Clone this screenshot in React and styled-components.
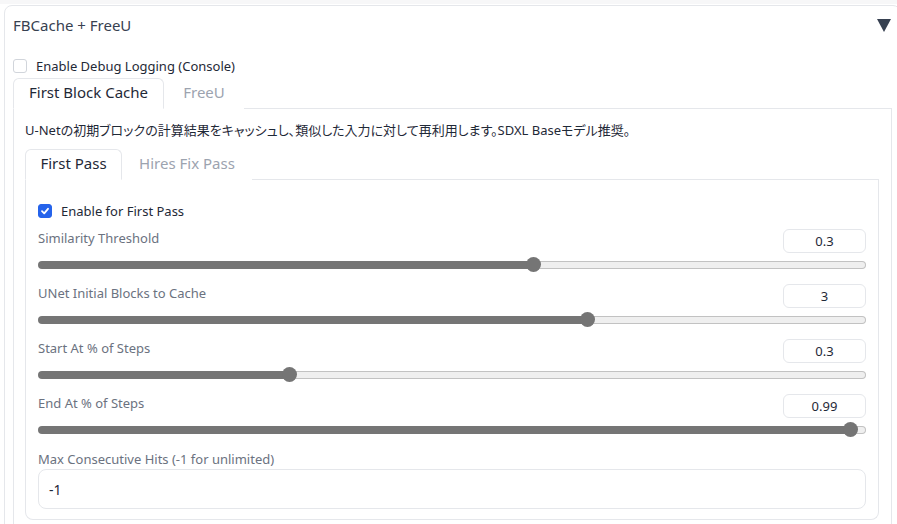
import React from 'react';
import styled, { createGlobalStyle } from 'styled-components';

const GlobalStyle = createGlobalStyle`
  html, body {
    margin: 0;
    padding: 0;
    background: #ffffff;
    overflow: hidden;
  }
  body {
    font-family: "Noto Sans", "Noto Sans CJK JP", sans-serif;
    color: #1f2937;
  }
`;

const sliders = [
  { label: 'Similarity Threshold', value: '0.3', frac: 0.6 },
  { label: 'UNet Initial Blocks to Cache', value: '3', frac: 0.667 },
  { label: 'Start At % of Steps', value: '0.3', frac: 0.3 },
  { label: 'End At % of Steps', value: '0.99', frac: 0.989 },
];

const Slider = ({ label, value, frac }) => (
  <SliderRow>
    <SliderHead>
      <FieldLabel>{label}</FieldLabel>
      <NumberBox>{value}</NumberBox>
    </SliderHead>
    <Track>
      <Filled style={{ width: `calc(7px + (100% - 14px) * ${frac})` }} />
      <Rest />
      <Thumb style={{ left: `calc(7px + (100% - 14px) * ${frac})` }} />
    </Track>
  </SliderRow>
);

const Check = () => (
  <svg width="10" height="10" viewBox="0 0 10 10">
    <path d="M2 5.2 L4.2 7.3 L8 2.8" fill="none" stroke="#fff" strokeWidth="1.8" strokeLinecap="round" strokeLinejoin="round" />
  </svg>
);

export default function App() {
  return (
    <>
      <GlobalStyle />
      <TopStrip />
      <Card>
        <Header>
          <Title>FBCache + FreeU</Title>
          <svg width="14" height="13" viewBox="0 0 14 13">
            <polygon points="0,0 14,0 7,13" fill="#374151" />
          </svg>
        </Header>
        <CheckRow $top={14}>
          <Box />
          <CheckText>Enable Debug Logging (Console)</CheckText>
        </CheckRow>
        <TabBar $top={5}>
          <Tab $active $w={151}>First Block Cache</Tab>
          <Tab $w={80}>FreeU</Tab>
        </TabBar>
        <Panel>
          <Description>
            U-Netの初期ブロックの計算結果をキャッシュし、類似した入力に対して再利用します。SDXL Baseモデル推奨。
          </Description>
          <TabBar $top={9}>
            <Tab $active $w={97}>First Pass</Tab>
            <Tab $w={130}>Hires Fix Pass</Tab>
          </TabBar>
          <InnerPanel>
            <CheckRow $top={0} $h={20}>
              <Box $checked><Check /></Box>
              <CheckText>Enable for First Pass</CheckText>
            </CheckRow>
            <Sliders>
              {sliders.map(s => (
                <Slider key={s.label} {...s} />
              ))}
            </Sliders>
            <FieldLabel $top={1}>Max Consecutive Hits (-1 for unlimited)</FieldLabel>
            <TextBox>-1</TextBox>
          </InnerPanel>
        </Panel>
      </Card>
    </>
  );
}

const TopStrip = styled.div`
  height: 4px;
  background: #f7f7f8;
`;

const Card = styled.div`
  margin: 1px 0 0 4px;
  width: 897px;
  box-sizing: border-box;
  border: 1px solid #e5e7eb;
  border-radius: 8px;
  padding: 0 8px;
  height: 560px;
`;

const Header = styled.div`
  height: 39px;
  display: flex;
  align-items: center;
  justify-content: space-between;
  padding-right: 1px;
`;

const Title = styled.span`
  font-size: 15px;
  color: #374151;
  padding-bottom: 2px;
`;

const CheckRow = styled.div`
  margin-top: ${p => p.$top}px;
  height: ${p => p.$h || 14}px;
  display: flex;
  align-items: center;
  gap: 9px;
`;

const Box = styled.span`
  width: 14px;
  height: 14px;
  box-sizing: border-box;
  border-radius: 3px;
  display: inline-flex;
  align-items: center;
  justify-content: center;
  border: 1px solid ${p => (p.$checked ? '#2563eb' : '#d1d5db')};
  background: ${p => (p.$checked ? '#2563eb' : '#ffffff')};
`;

const CheckText = styled.span`
  font-size: 13px;
  color: #1f2937;
`;

const TabBar = styled.div`
  margin-top: ${p => p.$top}px;
  display: flex;
  height: 30px;
  border-bottom: 1px solid #e5e7eb;
`;

const Tab = styled.div`
  width: ${p => p.$w}px;
  box-sizing: border-box;
  height: 31px;
  padding-bottom: 3px;
  display: flex;
  align-items: center;
  justify-content: center;
  font-size: 15px;
  color: ${p => (p.$active ? '#1f2937' : '#9ca3af')};
  background: #ffffff;
  border: 1px solid ${p => (p.$active ? '#e5e7eb' : 'transparent')};
  border-bottom: 1px solid ${p => (p.$active ? '#ffffff' : 'transparent')};
  border-radius: 6px 6px 0 0;
`;

const Panel = styled.div`
  border: 1px solid #e5e7eb;
  border-top: none;
  padding: 11px 12px 0 11px;
  height: 460px;
`;

const Description = styled.div`
  font-size: 13px;
  line-height: 20px;
  color: #1f2937;
  font-feature-settings: "palt";
`;

const InnerPanel = styled.div`
  border: 1px solid #e5e7eb;
  border-top: none;
  border-radius: 0 0 8px 8px;
  padding: 21px 12px 10px 12px;
`;

const Sliders = styled.div`
  margin-top: 8px;
  display: flex;
  flex-direction: column;
`;

const SliderRow = styled.div`
  height: 55px;
`;

const SliderHead = styled.div`
  display: flex;
  justify-content: space-between;
  align-items: flex-start;
`;

const FieldLabel = styled.div`
  margin-top: ${p => p.$top || 0}px;
  font-size: 13px;
  line-height: 18px;
  color: #6b7280;
`;

const NumberBox = styled.div`
  width: 83px;
  height: 24px;
  box-sizing: border-box;
  border: 1px solid #e5e7eb;
  border-radius: 6px;
  display: flex;
  align-items: center;
  justify-content: center;
  font-size: 13px;
  color: #1f2937;
`;

const Track = styled.div`
  position: relative;
  margin-top: 4px;
  height: 15px;
  display: flex;
  align-items: center;
`;

const Filled = styled.div`
  height: 8px;
  background: #757575;
  border-radius: 4px 0 0 4px;
`;

const Rest = styled.div`
  flex: 1;
  height: 8px;
  box-sizing: border-box;
  background: #efefef;
  border: 1px solid #c2c2c2;
  border-left: none;
  border-radius: 0 4px 4px 0;
`;

const Thumb = styled.div`
  position: absolute;
  top: 0;
  width: 15px;
  height: 15px;
  margin-left: -7.5px;
  border-radius: 50%;
  background: #757575;
`;

const TextBox = styled.div`
  margin-top: 1px;
  height: 40px;
  box-sizing: border-box;
  border: 1px solid #e5e7eb;
  border-radius: 8px;
  padding: 0 10px;
  display: flex;
  align-items: center;
  font-size: 14px;
  color: #1f2937;
`;
